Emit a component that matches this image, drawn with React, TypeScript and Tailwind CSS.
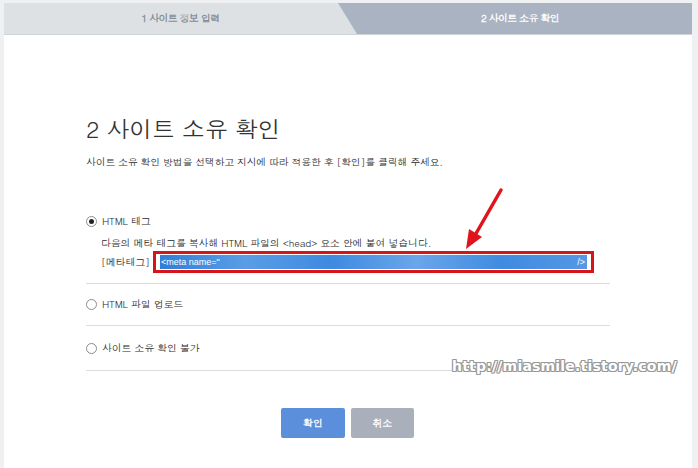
import React from "react"

const kr = "font-['Dotum','Noto_Sans_CJK_KR','Noto_Sans',sans-serif]"

function Radio({ checked }: { checked?: boolean }) {
    return (
        <span className="w-[11px] h-[11px] rounded-full border border-[#8c8c8c] bg-white flex items-center justify-center shrink-0">
            {checked && <span className="w-[5px] h-[5px] rounded-full bg-[#222]" />}
        </span>
    )
}

export default function App() {
    return (
        <div className={`w-[698px] h-[468px] bg-[#eef0f2] overflow-hidden pt-[3px] pl-[4px] pr-[6px] ${kr}`}>
            <div className="relative bg-white h-[480px]">
                {/* Step tabs */}
                <div className="flex h-[32px] border-b border-[#cfd3d8] text-[10px] tracking-[-0.7px] font-bold">
                    <div className="w-[353px] bg-[#dee1e4] text-[#878d96] flex items-center justify-center">
                        1 사이트 정보 입력
                    </div>
                    <div className="flex-1 -ml-[19px] bg-[#aab3c2] text-white flex items-center justify-center pl-[10px] [clip-path:polygon(0_0,100%_0,100%_100%,19px_100%)]">
                        2 사이트 소유 확인
                    </div>
                </div>

                <div className="pl-[82px] pt-[77px] w-[606px]">
                    <h1 className="text-[23px] leading-[32px] font-light text-[#333] tracking-[-0.3px]">2 사이트 소유 확인</h1>
                    <p className="mt-[10px] text-[10px] leading-[16px] text-[#2a2a2a] tracking-[-0.3px]">
                        사이트 소유 확인 방법을 선택하고 지시에 따라 적용한 후 [확인]를 클릭해 주세요.
                    </p>

                    <div className="mt-[43px] border-b border-[#dcdcdc] pb-[10px] text-[10px] tracking-[-0.2px] text-[#2a2a2a]">
                        <label className="flex items-center gap-[5px] h-[16px]">
                            <Radio checked />
                            HTML 태그
                        </label>
                        <div className="pl-[15px] mt-[6px] leading-[16px]">
                            <p className="whitespace-nowrap">다음의 메타 태그를 복사해 HTML 파일의 &lt;head&gt; 요소 안에 붙여 넣습니다.</p>
                            <div className="flex items-center">
                                <span className="w-[52px] shrink-0 whitespace-nowrap">[메타태그]</span>
                                <div className="w-[441px] h-[22px] shrink-0 border-[3px] border-[#d7141c] bg-white px-[4px] py-[1px]">
                                    <div className="h-[14px] bg-[linear-gradient(90deg,#2f7fd8_0%,#5a9de6_20%,#3e8ae0_40%,#6aa6ea_60%,#3f8be0_80%,#5598e4_100%)] text-white text-[9px] leading-[14px] tracking-normal flex justify-between pl-[1px] pr-[2px] font-['Liberation_Sans',sans-serif]">
                                        <span>&lt;meta name="</span>
                                        <span>/&gt;</span>
                                    </div>
                                </div>
                            </div>
                        </div>
                    </div>

                    <div className="border-b border-[#dcdcdc] h-[42px] flex items-center text-[10px] tracking-[-0.2px] text-[#2a2a2a]">
                        <label className="flex items-center gap-[5px]">
                            <Radio />
                            HTML 파일 업로드
                        </label>
                    </div>
                    <div className="border-b border-[#dcdcdc] h-[45px] flex items-center text-[10px] tracking-[-0.2px] text-[#2a2a2a]">
                        <label className="flex items-center gap-[5px]">
                            <Radio />
                            사이트 소유 확인 불가
                        </label>
                    </div>

                    <div className="flex gap-[6px] mt-[37px] pl-[195px]">
                        <button className="w-[64px] h-[30px] bg-[#5b8fdb] rounded-[2px] text-white text-[10px] font-bold">확인</button>
                        <button className="w-[63px] h-[30px] bg-[#a9b0bc] rounded-[2px] text-white text-[10px] font-bold">취소</button>
                    </div>
                </div>

                {/* annotation arrow */}
                <svg className="absolute left-[454px] top-[182px]" width="50" height="70" viewBox="0 0 50 70">
                    <line x1="43" y1="5" x2="16" y2="52" stroke="#e0141c" strokeWidth="3.5" strokeLinecap="round" />
                    <polygon points="8,64 11,44 24,52" fill="#e0141c" />
                </svg>

                {/* watermark */}
                <div className="absolute left-[448px] top-[353px] text-[14px] leading-[20px] font-bold tracking-[0.2px] text-white font-['DejaVu_Sans',sans-serif] [text-shadow:1px_0_0_#999,-1px_0_0_#999,0_1px_0_#999,0_-1px_0_#999,1px_1px_0_#999,-1px_-1px_0_#999,1px_-1px_0_#999,-1px_1px_0_#999]">
                    http://miasmile.tistory.com/
                </div>
            </div>
        </div>
    )
}
